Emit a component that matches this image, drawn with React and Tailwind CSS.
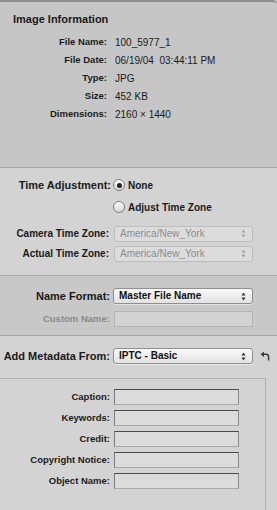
import React from "react";

const font = { fontFamily: '"Liberation Sans", Arial, sans-serif' };

function Arrows({ disabled }) {
  const c = disabled ? "#a0a0a0" : "#333";
  return (
    <svg width="5" height="9" viewBox="0 0 5 9" className="shrink-0">
      <path d="M2.5 0.5 L4.5 3.5 L0.5 3.5 Z" fill={c} />
      <path d="M2.5 8.5 L4.5 5.5 L0.5 5.5 Z" fill={c} />
    </svg>
  );
}

function Select({ value, disabled, bold, width }) {
  return (
    <div
      className={
        "flex items-center justify-between h-[16px] rounded-[3px] border pl-[5px] pr-[6px] text-[10px] leading-none " +
        (disabled
          ? "border-[#bdbdbd] bg-[#dcdcdc] text-[#8c8c8c]"
          : "border-[#8f8f8f] bg-gradient-to-b from-[#fafafa] to-[#e2e2e2] text-[#111] shadow-[0_1px_0_rgba(255,255,255,0.5)]") +
        (bold ? " font-bold" : "")
      }
      style={{ width }}
    >
      <span>{value}</span>
      <Arrows disabled={disabled} />
    </div>
  );
}

function Field({ disabled, width = 125 }) {
  return (
    <div
      className={
        "h-[16px] border " +
        (disabled
          ? "border-[#b4b4b4] bg-[#d3d3d3]"
          : "border-t-[#4a4a4a] border-l-[#7a7a7a] border-r-[#8a8a8a] border-b-[#a8a8a8] bg-[#dbdbdb]")
      }
      style={{ width }}
    />
  );
}

function Radio({ checked }) {
  return (
    <div className="w-[12px] h-[12px] rounded-full border border-[#7d7d7d] bg-gradient-to-b from-[#fdfdfd] to-[#d6d6d6] flex items-center justify-center shrink-0">
      {checked && <div className="w-[5px] h-[5px] rounded-full bg-[#222]" />}
    </div>
  );
}

function InfoRow({ label, value }) {
  return (
    <div className="flex items-center h-[18px]">
      <div className="w-[107px] text-right text-[9.5px] font-bold text-[#1a1a1a]">{label}</div>
      <div className="pl-[8px] text-[10px] text-[#1a1a1a] whitespace-pre">{value}</div>
    </div>
  );
}

function MetaRow({ label }) {
  return (
    <div className="flex items-center h-[16px]">
      <div className="w-[110px] text-right text-[9.5px] font-bold text-[#1a1a1a] whitespace-nowrap">{label}</div>
      <div className="ml-[4px]">
        <Field />
      </div>
    </div>
  );
}

export default function App() {
  return (
    <div className="w-[277px] h-[510px] overflow-hidden bg-[#d3d3d3] select-none" style={font}>
      {/* Image Information */}
      <div className="h-[167px] bg-[#c6c6c6] border-t-2 border-[#8c8c8c] rounded-tr-[4px] pt-[11px]">
        <div className="pl-[13px] text-[11px] leading-[13px] font-bold text-[#1a1a1a]">Image Information</div>
        <div className="mt-[7px] flex flex-col">
          <InfoRow label="File Name:" value="100_5977_1" />
          <InfoRow label="File Date:" value="06/19/04  03:44:11 PM" />
          <InfoRow label="Type:" value="JPG" />
          <InfoRow label="Size:" value="452 KB" />
          <InfoRow label="Dimensions:" value="2160 × 1440" />
        </div>
      </div>

      {/* Time adjustment */}
      <div className="h-[108px] border-t border-[#a6a6a6] bg-[#d3d3d3] pt-[8px]">
        <div className="flex items-center h-[18px]">
          <div className="w-[111px] text-right text-[11px] font-bold text-[#1a1a1a]">Time Adjustment:</div>
          <div className="ml-[2px] flex items-center gap-[3px]">
            <Radio checked />
            <span className="text-[10px] font-bold text-[#1a1a1a]">None</span>
          </div>
        </div>
        <div className="flex items-center h-[18px] mt-[4px]">
          <div className="w-[111px]" />
          <div className="ml-[2px] flex items-center gap-[3px]">
            <Radio />
            <span className="text-[10px] font-bold text-[#1a1a1a]">Adjust Time Zone</span>
          </div>
        </div>
        <div className="flex items-center h-[15px] mt-[10px]">
          <div className="w-[109px] text-right text-[10px] font-bold text-[#1a1a1a] whitespace-nowrap">Camera Time Zone:</div>
          <div className="ml-[5px]">
            <Select value="America/New_York" disabled width={139} />
          </div>
        </div>
        <div className="flex items-center h-[15px] mt-[5px]">
          <div className="w-[109px] text-right text-[10px] font-bold text-[#1a1a1a] whitespace-nowrap">Actual Time Zone:</div>
          <div className="ml-[5px]">
            <Select value="America/New_York" disabled width={139} />
          </div>
        </div>
      </div>

      {/* Name format */}
      <div className="h-[60px] border-t border-[#a8a8a8] bg-[#c8c8c8] pt-[12px]">
        <div className="flex items-center h-[16px]">
          <div className="w-[110px] text-right text-[11px] font-bold text-[#1a1a1a]">Name Format:</div>
          <div className="ml-[3px]">
            <Select value="Master File Name" bold width={140} />
          </div>
        </div>
        <div className="flex items-center h-[16px] mt-[7px]">
          <div className="w-[110px] text-right text-[9.5px] font-bold text-[#8a8a8a]">Custom Name:</div>
          <div className="ml-[4px]">
            <Field disabled width={139} />
          </div>
        </div>
      </div>

      {/* Metadata */}
      <div className="border-t border-[#ababab] bg-[#d3d3d3] pt-[12px]">
        <div className="flex items-center h-[16px]">
          <div className="w-[110px] text-right text-[11px] font-bold text-[#1a1a1a] whitespace-nowrap">Add Metadata From:</div>
          <div className="ml-[3px]">
            <Select value="IPTC - Basic" bold width={140} />
          </div>
          <svg width="10" height="10" viewBox="0 0 10 10" className="ml-[7px]">
            <path d="M0.6 3.2 L4 0.4 L4 6 Z" fill="#3a3a3a" />
            <path d="M3.5 3.2 H6 Q8.6 3.2 8.6 5.8 V9.4" stroke="#3a3a3a" strokeWidth="1.5" fill="none" />
          </svg>
        </div>
        <div className="mt-[14px] w-[266px] h-[200px] border-t border-r border-[#b2b2b2] pt-[10px] flex flex-col gap-[5px]">
          <MetaRow label="Caption:" />
          <MetaRow label="Keywords:" />
          <MetaRow label="Credit:" />
          <MetaRow label="Copyright Notice:" />
          <MetaRow label="Object Name:" />
        </div>
      </div>
    </div>
  );
}
